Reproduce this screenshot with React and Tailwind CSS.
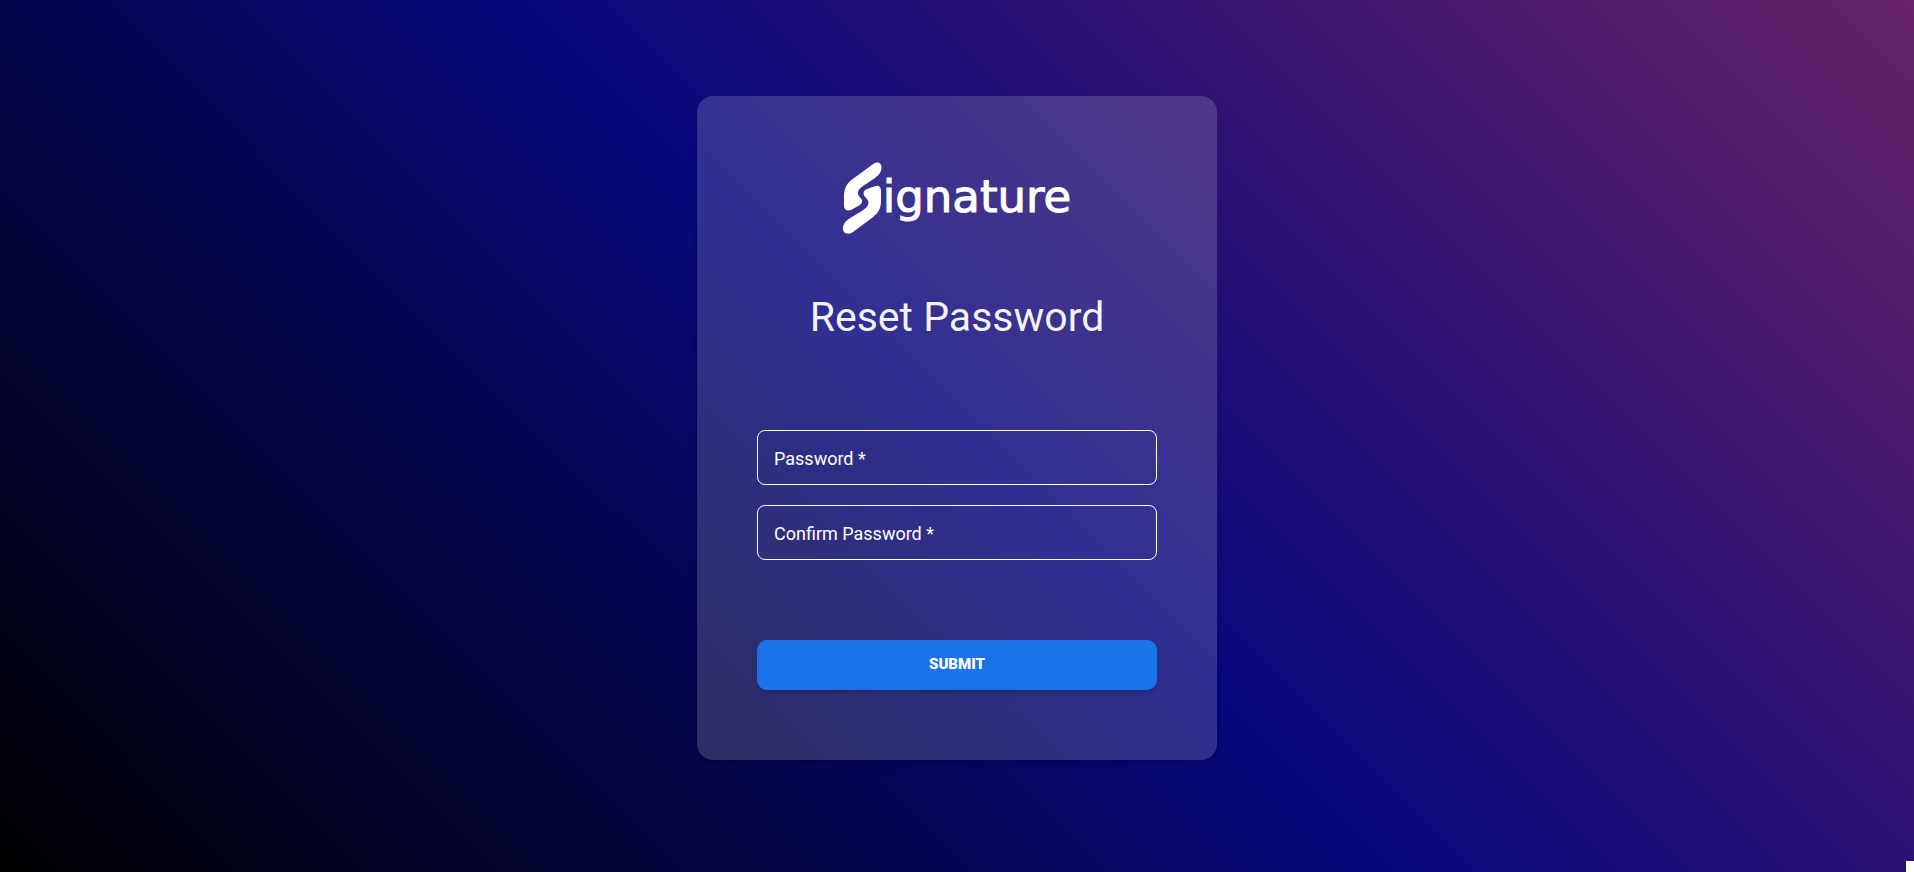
function Logo() {
  return (
    <div className="flex h-[72px] items-center justify-center text-white" role="img" aria-label="Signature">
      <svg className="h-[72px] w-10 shrink-0" viewBox="0 0 40 72" fill="currentColor" aria-hidden="true">
        <path d="M31 1.500C35-1 38.500 1 38.500 5C38.500 10 36 13 32 16L20 24C14 28 13.500 32 17.500 36C20.500 39 19.500 41 16 43.500L9 47.500C5 50 1 48 1 44V35C1 27 3 22 9 17.500Z" />
        <path d="M24 27L31 24.500C35 22.500 38 24.500 38 28.500V39C38 47 35 51 29.500 55.500L10 70C5 73.500 0 71 0 67C0 61.500 3 58.500 8 55.500L18 49.500C25.500 45 27.500 41 23.500 36.500C19 32 20 29 24 27Z" />
      </svg>
      <span className="pb-1 font-['DejaVu_Sans',sans-serif] text-[45px] leading-none [-webkit-text-stroke:1px_white]">ignature</span>
    </div>
  );
}

function Field({ id, label }) {
  return (
    <div className="relative">
      <input
        id={id}
        type="password"
        required
        placeholder=" "
        className="peer block h-[55px] w-full rounded-lg border border-white bg-transparent px-4 text-white outline-none"
      />
      <label
        htmlFor={id}
        className="pointer-events-none absolute inset-y-0 left-[17px] flex items-center pt-0.5 text-lg text-white peer-focus:hidden peer-[:not(:placeholder-shown)]:hidden"
      >
        {label} *
      </label>
    </div>
  );
}

export default function App() {
  return (
    <main className="flex min-h-screen flex-col items-center bg-[linear-gradient(45deg,#000000,#08087c,#662268)] px-4 py-24 font-[Roboto,sans-serif]">
      <form className="w-full max-w-[520px] rounded-2xl bg-white/16 px-[60px] pt-[66px] pb-[70px] shadow-md">
        <Logo />
        <h1 className="mt-[59px] text-center text-[41px] leading-[48px] text-white/94">Reset Password</h1>
        <div className="mt-[89px] flex flex-col gap-5">
          <Field id="password" label="Password" />
          <Field id="confirm-password" label="Confirm Password" />
        </div>
        <button type="submit" className="mt-20 h-[50px] w-full rounded-[10px] bg-[#1a73e8] pb-0.5 text-[15px] font-black text-white uppercase shadow-md">
          Submit
        </button>
      </form>
      <div className="fixed right-0 bottom-0 h-[11px] w-2 bg-white" />
    </main>
  );
}
